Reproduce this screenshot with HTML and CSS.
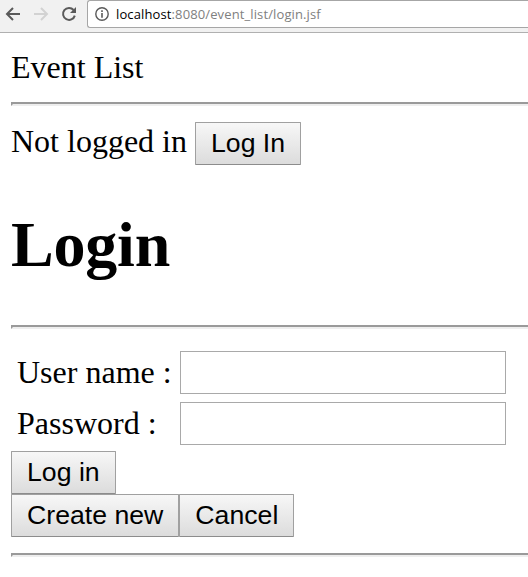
FILE: index.html
```
<!DOCTYPE html>
<html lang="en">
<head>
<meta charset="utf-8">
<title>Event List</title>
<link rel="stylesheet" href="styles.css">
</head>
<body>
<header class="toolbar">
  <svg class="nav" width="87" height="32" viewBox="0 0 87 32" fill="none" stroke-width="2">
    <path d="M20 14H7.5M13 8L7 14L13 20" stroke="#5a5a5a"/>
    <path d="M34 14H46.5M41 8L47 14L41 20" stroke="#d2d2d2"/>
    <path d="M73.6 10A6 6 0 1 0 74.8 15.6" stroke="#5a5a5a"/>
    <path d="M76 7V13H70Z" fill="#5a5a5a"/>
  </svg>
  <div class="address">
    <svg class="info" width="14" height="14" viewBox="0 0 14 14">
      <circle cx="7" cy="7" r="6.2" fill="none" stroke="#5a5a5a" stroke-width="1.4"/>
      <path d="M6.2 3.3h1.6v1.6H6.2zM6.2 6h1.6v4.7H6.2z" fill="#5a5a5a"/>
    </svg>
    <span class="url"><span class="host">localhost</span>:8080/event_list/login.jsf</span>
  </div>
</header>
<main class="page">
  <div class="site-title">Event List</div>
  <hr>
  <div class="status"><span>Not logged in</span><button>Log In</button></div>
  <h1>Login</h1>
  <hr>
  <form>
    <div class="fields">
      <label for="user">User name :</label><input id="user" type="text">
      <label for="pass">Password :</label><input id="pass" type="password">
    </div>
    <div class="actions"><button type="button">Log in</button></div>
    <div class="actions"><button type="button">Create new</button><button type="button">Cancel</button></div>
  </form>
  <hr class="last">
</main>
</body>
</html>
```
FILE: styles.css
```
* { box-sizing: border-box; }
body {
  margin: 0;
  background: #fff;
  color: #000;
  font: 32px/36px "Liberation Serif", "Times New Roman", serif;
  overflow: hidden;
}
.toolbar {
  display: flex;
  align-items: flex-start;
  height: 33px;
  background: #f1f1f1;
  border-bottom: 1px solid #b0b0b0;
}
.nav { flex: none; }
.address {
  flex: 1;
  display: flex;
  align-items: center;
  height: 28px;
  padding-left: 7px;
  background: #fff;
  border: 1px solid #a6a6a6;
  border-right: 0;
  border-radius: 3px 0 0 3px;
}
.info { flex: none; margin-right: 7px; }
.url {
  font: 13px/16px "Open Sans", sans-serif;
  letter-spacing: 0.12px;
  color: #808080;
  white-space: nowrap;
}
.host { color: #000; }
.page { padding: 16px 0 0 11px; }
.site-title { height: 53px; }
hr {
  height: 4px;
  margin: 0;
  border: 2px solid;
  border-color: #9a9a9a #eee #eee #9a9a9a;
  border-right: 0;
}
.status {
  display: flex;
  align-items: flex-start;
  gap: 8px;
  margin-top: 16px;
}
.status span { padding-top: 1px; }
h1 {
  margin: 43px 0 0;
  height: 117px;
  font-size: 64px;
  line-height: 74px;
  letter-spacing: -0.2px;
}
button {
  height: 43px;
  padding: 0 15px 2px;
  border: 1px solid #a0a0a0;
  border-bottom-color: #8c8c8c;
  border-radius: 1px;
  background: linear-gradient(#f7f7f7, #dcdcdc);
  color: #000;
  font: 26.67px/30px "Liberation Sans", Arial, sans-serif;
  white-space: nowrap;
}
.fields {
  display: grid;
  grid-template-columns: 163px 326px;
  row-gap: 8px;
  align-items: center;
  padding: 22px 0 6px 6px;
}
.fields label { padding-bottom: 1px; }
input {
  height: 43px;
  width: 326px;
  margin: 0;
  border: 1px solid #a9a9a9;
  background: #fff;
  font: 26.67px "Liberation Sans", Arial, sans-serif;
}
.actions { display: flex; }
.last { margin-top: 16px; }
```
